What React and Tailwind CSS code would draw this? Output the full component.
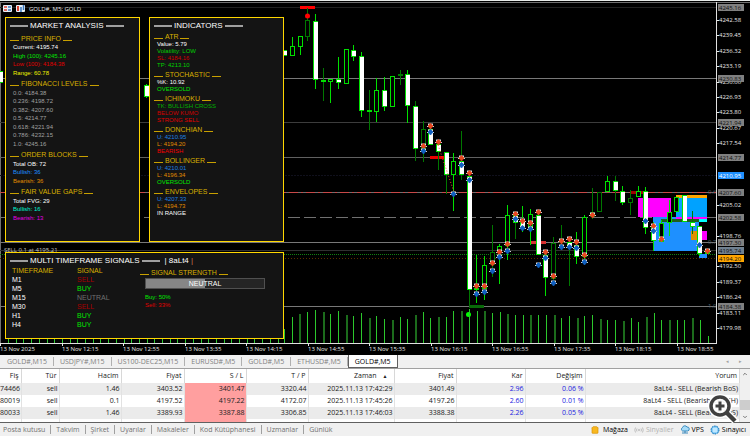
import { ChevronDown, ChevronUp, ShoppingBag } from 'lucide-react';
import { clsx } from 'clsx';

// x, high, body top, body bottom, low, kind (w = white, h = hollow), dim wick
const candles = [
  [0, 71, 71, 83, 83, 'w'],
  [146, 84, 85, 97, 98, 'w'],
  [284, 50, 50, 56, 56, 'w'],
  [292, 37, 46, 56, 56, 'h'],
  [300, 36, 36, 47, 55, 'h'],
  [307, 8, 20, 37, 41, 'h', 1],
  [315, 14, 21, 80, 89, 'w'],
  [323, 68, 80, 82, 101, 'w', 1],
  [330, 79, 79, 82, 103, 'h'],
  [338, 57, 79, 83, 89, 'w'],
  [346, 49, 49, 84, 84, 'h'],
  [353, 45, 50, 57, 61, 'w'],
  [361, 52, 56, 111, 117, 'w'],
  [369, 90, 110, 112, 130, 'w', 1],
  [376, 78, 90, 112, 122, 'h'],
  [384, 77, 90, 107, 111, 'w'],
  [392, 76, 76, 107, 107, 'h'],
  [400, 70, 74, 75, 85, 'h', 1],
  [407, 70, 74, 106, 123, 'w'],
  [415, 101, 106, 149, 161, 'w', 1],
  [423, 121, 129, 149, 162, 'h', 1],
  [430, 124, 129, 145, 145, 'w'],
  [438, 140, 144, 152, 170, 'w', 1],
  [446, 152, 152, 175, 194, 'w', 1],
  [453, 153, 161, 175, 211, 'h'],
  [461, 131, 161, 175, 180, 'w', 1],
  [469, 176, 176, 290, 305, 'w', 1],
  [476, 255, 288, 290, 303, 'h'],
  [484, 256, 265, 289, 300, 'h'],
  [492, 225, 252, 265, 277, 'h', 1],
  [499, 244, 246, 252, 284, 'h'],
  [507, 205, 215, 246, 260, 'h'],
  [515, 212, 215, 223, 239, 'w', 1],
  [522, 206, 221, 227, 232, 'w'],
  [530, 209, 214, 227, 245, 'h'],
  [538, 210, 215, 255, 255, 'w'],
  [545, 250, 255, 278, 296, 'w'],
  [553, 237, 243, 279, 283, 'h', 1],
  [561, 225, 241, 243, 248, 'h', 1],
  [569, 238, 242, 247, 286, 'w', 1],
  [576, 232, 245, 257, 264, 'w'],
  [584, 215, 217, 257, 263, 'h'],
  [592, 188, 212, 217, 219, 'h', 1],
  [599, 192, 192, 212, 212, 'h', 1],
  [607, 176, 181, 192, 192, 'h'],
  [615, 176, 181, 191, 201, 'w', 1],
  [622, 186, 191, 203, 205, 'w'],
  [630, 190, 198, 203, 215, 'h', 1],
  [638, 186, 191, 197, 197, 'h'],
  [645, 187, 191, 228, 234, 'w'],
  [653, 222, 226, 241, 251, 'w'],
  [661, 220, 223, 242, 242, 'h'],
  [669, 200, 212, 223, 236, 'h'],
  [676, 197, 197, 212, 212, 'h'],
  [684, 195, 195, 222, 222, 'w'],
  [692, 211, 222, 227, 234, 'w', 1],
  [699, 226, 226, 254, 256, 'w'],
  [707, 250, 250, 254, 254, 'h'],
];

const sellMarks = [
  [423, 146], [430, 126], [438, 142], [461, 158], [469, 173], [476, 286], [484, 286],
  [492, 263], [499, 252], [507, 244], [515, 214], [522, 221], [530, 223], [538, 212],
  [545, 252], [553, 276], [561, 241], [569, 239], [576, 242], [584, 255], [592, 215],
  [653, 226], [661, 239], [707, 251],
];

const buyMarks = [
  [423, 151], [430, 132], [453, 194], [461, 165], [469, 180], [476, 294], [484, 292],
  [492, 271], [499, 257], [507, 251], [515, 219], [522, 228], [530, 229], [538, 265],
  [545, 258], [553, 283], [561, 247], [569, 247], [576, 248], [584, 262], [645, 221],
  [653, 231], [699, 245],
];

// volume bar tops, from x = 284 on, one every 7.7
const volumes = [
  329, 317, 314, 312, 310, 312, 314, 311, 315, 316, 313, 318, 316, 319, 320, 317, 319, 315,
  312, 318, 317, 317, 311, 311, 309, 311, 311, 313, 312, 314, 315, 315, 315, 315, 315, 315,
  318, 316, 318, 316, 315, 319, 320, 320, 321, 318, 322, 317, 313, 320, 320, 320, 320, 318,
  320, 336,
];

const prices = [
  '4242.58', '4239.45', '4236.32', '4233.19', '4230.06', '4226.93', '4223.80', '4220.67',
  '4217.54', '4214.41', '4211.28', '4208.15', '4205.02', '4201.89', '4198.76', '4195.63',
  '4192.50', '4189.37', '4186.24', '4183.11', '4179.98',
];

const priceTags = [
  [7, '4245.16', '#808080'],
  [78, '4230.83', '#808080'],
  [122, '4221.94', '#808080'],
  [157, '4214.77', '#808080'],
  [175, '4210.95', '#1e90ff'],
  [192, '4207.60', '#808080'],
  [217, '4202.58', '#808080'],
  [242, '4197.30', '#808080'],
  [250, '4195.74', '#708090'],
  [258, '4194.20', '#ffa500'],
  [306, '4184.38', '#808080'],
];

// scale labels that sit right under a tag are left out
const scale = prices
  .map((price, i) => [Math.round(20 + i * 15.4), price])
  .filter(([y]) => !priceTags.some(([tagY]) => Math.abs(tagY - y) < 4));

const times = [
  '13 Nov 2025', '13 Nov 12:15', '13 Nov 12:55', '13 Nov 13:35', '13 Nov 14:15', '13 Nov 14:55',
  '13 Nov 15:35', '13 Nov 16:15', '13 Nov 16:55', '13 Nov 17:35', '13 Nov 18:15', '13 Nov 18:55',
];

const market = [
  ['PRICE INFO', [
    ['Current: 4195.74', 'text-white'],
    ['High (100): 4245.16', 'text-[#00e600]'],
    ['Low (100): 4184.38', 'text-[#e00000]'],
    ['Range: 60.78', 'text-[#f0f000]'],
  ]],
  ['FIBONACCI LEVELS', [
    ['0.0: 4184.38', 'text-[#a0a0a0]'],
    ['0.236: 4198.72', 'text-[#a0a0a0]'],
    ['0.382: 4207.60', 'text-[#a0a0a0]'],
    ['0.5: 4214.77', 'text-[#a0a0a0]'],
    ['0.618: 4221.94', 'text-[#a0a0a0]'],
    ['0.786: 4232.15', 'text-[#a0a0a0]'],
    ['1.0: 4245.16', 'text-[#a0a0a0]'],
  ]],
  ['ORDER BLOCKS', [
    ['Total OB: 72', 'text-white'],
    ['Bullish: 36', 'text-[#1e90ff]'],
    ['Bearish: 36', 'text-[#e08c00]'],
  ]],
  ['FAIR VALUE GAPS', [
    ['Total FVG: 29', 'text-white'],
    ['Bullish: 16', 'text-[#00f0d0]'],
    ['Bearish: 13', 'text-[#e000e0]'],
  ]],
];

const indicators = [
  ['ATR', [
    ['Value: 5.79', 'text-white'],
    ['Volatility: LOW', 'text-[#00d000]'],
    ['SL: 4184.16', 'text-[#d00000]'],
    ['TP: 4213.10', 'text-[#00d000]'],
  ]],
  ['STOCHASTIC', [
    ['%K: 10.92', 'text-white'],
    ['OVERSOLD', 'text-[#00e600]'],
  ]],
  ['ICHIMOKU', [
    ['TK: BULLISH CROSS', 'text-[#00b000]'],
    ['BELOW KUMO', 'text-[#d00000]'],
    ['STRONG SELL', 'text-[#e00000]'],
  ]],
  ['DONCHIAN', [
    ['U: 4210.95', 'text-[#1e80e0]'],
    ['L: 4194.20', 'text-[#e08c00]'],
    ['BEARISH', 'text-[#f00000]'],
  ]],
  ['BOLLINGER', [
    ['U: 4210.01', 'text-[#1e80e0]'],
    ['L: 4196.34', 'text-[#e08c00]'],
    ['OVERSOLD', 'text-[#00e600]'],
  ]],
  ['ENVELOPES', [
    ['U: 4207.33', 'text-[#1e80e0]'],
    ['L: 4194.73', 'text-[#e08c00]'],
    ['IN RANGE', 'text-white'],
  ]],
];

const signals = [
  ['M1', 'SELL'],
  ['M5', 'BUY'],
  ['M15', 'NEUTRAL'],
  ['M30', 'SELL'],
  ['H1', 'BUY'],
  ['H4', 'BUY'],
];

const signalColors = {
  SELL: 'text-[#a80000]',
  BUY: 'text-[#00e600]',
  NEUTRAL: 'text-[#707070]',
};

const chartTabs = ['GOLD#,M15', 'USDJPY#,M15', 'US100-DEC25,M15', 'EURUSD#,M5', 'GOLD#,M5', 'ETHUSD#,M5', 'GOLD#,M5'];

const columns = [
  ['Fiş', 'w-[21px]'],
  ['Tür', 'w-[38px]'],
  ['Hacim', 'w-[62px]'],
  ['Fiyat', 'w-[63px]'],
  ['S / L', 'w-[62px]'],
  ['T / P', 'w-[62px]'],
  ['Zaman', 'w-[86px]'],
  ['Fiyat', 'w-[62px]'],
  ['Kar', 'w-[69px]'],
  ['Değişim', 'w-[60px]'],
  ['Yorum', ''],
];

const trades = [
  ['74466', 'sell', '1.46', '3403.52', '3401.47', '3320.44', '2025.11.13 17:42:29', '3401.49', '2.96', '0.06 %', '8aLt4 - SELL (Bearish BoS)'],
  ['80019', 'sell', '0.1', '4197.52', '4197.22', '4172.07', '2025.11.13 17:45:26', '4197.26', '2.60', '0.01 %', '8aLt4 - SELL (Bearish CHoCH)'],
  ['80033', 'sell', '1.46', '3389.93', '3387.88', '3306.85', '2025.11.13 17:46:03', '3388.38', '2.26', '0.05 %', '8aLt4 - SELL (Bearish BoS)'],
  ['80037', 'sell', '0.09', '4197.53', '4197.23', '4180.89', '2025.11.13 17:46:03', '4197.13', '1.47', '0.01 %', '8aLt4 - SELL (Bearish BoS)'],
];

const toolTabs = ['Posta kutusu', 'Takvim', 'Şirket', 'Uyarılar', 'Makaleler', 'Kod Kütüphanesi', 'Uzmanlar', 'Günlük'];

function Candle({ data }) {
  const [x, high, top, bottom, low, kind, dim] = data;
  const color = dim ? '#007800' : '#00e000';
  return (
    <g stroke={color}>
      <path d={`M${x + 0.5} ${high}V${low}`} />
      <rect
        x={x - 2 + 0.5}
        y={top + 0.5}
        width={4}
        height={Math.max(bottom - top - 1, 1)}
        fill={kind === 'w' ? '#fff' : '#000'}
        stroke={kind === 'w' ? '#00e000' : color}
      />
      {kind === 'w' && <rect x={x - 1} y={top + 1} width={4} height={Math.max(bottom - top - 2, 0)} fill="#fff" stroke="none" />}
    </g>
  );
}

function Mark({ x, y, color }) {
  return (
    <g transform={`translate(${x + 0.5} ${y})`}>
      <path d="M-2.5 -2.5H2.5V0H3.5V1H-3.5V0H-2.5Z" fill="#d8d8d8" />
      <path d="M0 -2.5L2.5 0L0 3L-2.5 0Z" fill={color} stroke={color} strokeWidth="0.8" />
    </g>
  );
}

function PriceChart() {
  return (
    <svg viewBox="0 0 750 355" className="block w-full" fontFamily="'Open Sans', sans-serif" fontSize="7">
      <rect width="750" height="355" fill="#000" />
      <rect width="750" height="1" fill="#e8ecea" />
      <path d="M0 2.5H750M0.5 2V343" stroke="#707070" fill="none" />

      <g fill="none" shapeRendering="crispEdges">
        <path d="M0 7.5H716" stroke="#222" />
        <path d="M0 78.5H716M0 242.5H716M0 306.5H716" stroke="#787878" />
        <path d="M0 122.5H716" stroke="#3c3c3c" />
        <path d="M0 157.5H716" stroke="#606060" />
        <path d="M0 192.5H716" stroke="#707070" />
        <path d="M0 192.5H716" stroke="#c84848" strokeDasharray="9 3 2 3" />
        <path d="M0 217.5H716" stroke="#707070" strokeDasharray="12 4" />
        <path d="M0 250.5H716" stroke="#303030" />
        <path d="M0 254.5H716" stroke="#108010" strokeDasharray="1 1" />
        <path d="M0 258.5H716" stroke="#5a3000" strokeDasharray="1 2" />
        <path d="M0 175.5H716" stroke="#10101c" strokeDasharray="2 1" />
      </g>

      <g shapeRendering="crispEdges">
        <rect x="638" y="198" width="33" height="19" fill="#ff00ff" />
        <rect x="653" y="217" width="46" height="34" fill="#1e90ff" />
        <rect x="676" y="195" width="31" height="25" fill="#00a2ff" />
        <rect x="676" y="195" width="31" height="3" fill="#ffa500" />
        <rect x="676" y="217" width="31" height="2" fill="#ff00ff" />
        <rect x="661" y="219" width="38" height="3" fill="#20601c" />
        <rect x="699" y="219" width="8" height="3" fill="#00ffff" />
        <rect x="691" y="231" width="11" height="9" fill="#e09000" />
        <rect x="702" y="231" width="5" height="9" fill="#ff00ff" />
        <rect x="699" y="254" width="8" height="4" fill="#1e90ff" />
        <rect x="630" y="191" width="15" height="3" fill="#a00000" />
        <rect x="300" y="6" width="15" height="3" fill="#ff0000" />
        <rect x="430" y="156" width="16" height="3" fill="#e80000" />
        <rect x="530" y="241" width="16" height="3" fill="#d83030" />
        <rect x="469" y="305" width="15" height="3" fill="#086808" />
      </g>

      {candles.map((c) => <Candle key={c[0]} data={c} />)}
      <path d="M438 145L454 192" stroke="#ff5030" strokeDasharray="1 2" />
      <circle cx="307.5" cy="16" r="2.5" fill="#ff0000" />
      <circle cx="468.5" cy="314.5" r="2.5" fill="#00ff00" />
      {sellMarks.map(([x, y]) => <Mark key={x} x={x} y={y} color="#e84820" />)}
      {buyMarks.map(([x, y]) => <Mark key={x} x={x} y={y} color="#1060c0" />)}

      <g shapeRendering="crispEdges">
        {Array.from({ length: 36 }, (_, i) => (
          <rect key={i} x={Math.round(8 + i * 7.7)} y="336" width="1" height="7" fill="#30c830" />
        ))}
        {volumes.map((top, i) => (
          <rect
            key={i}
            x={Math.round(284 + i * 7.7)}
            y={top}
            width={i % 3 === 2 ? 2 : 1}
            height={343 - top}
            fill={i % 3 === 2 ? '#1c6c1c' : '#2cc82c'}
          />
        ))}
      </g>

      <text x="29" y="11" fill="#e8e8e8" fontSize="6">GOLD#, M5:  GOLD</text>
      <text x="4" y="252" fill="#c0c0c0" fontSize="6">SELL 0.1 at 4195.21</text>
      <g fontSize="6" fill="#50606c">
        <text x="708" y="194">0.6</text>
        <text x="708" y="244">0.7</text>
        <text x="708" y="308">1.0</text>
      </g>
      <g>
        <rect x="3" y="5" width="9" height="7" rx="1" fill="#e8f0f8" />
        <path d="M4 7H7M4 10H7" stroke="#d84030" strokeWidth="1.5" />
        <path d="M8 7H11M8 10H11" stroke="#3878c0" strokeWidth="1.5" />
        <rect x="16" y="5" width="9" height="7" rx="1" fill="#e8f0f8" />
        <path d="M18 6V11" stroke="#d84030" strokeWidth="2" />
        <path d="M21 7V12M23.5 5V10" stroke="#3878c0" strokeWidth="1.5" />
      </g>

      <path d="M716.5 2V343.5M0 343.5H717" stroke="#e0e0e0" fill="none" />
      <g fill="#e8e8e8" fontSize="6">
        {scale.map(([y, price]) => (
          <g key={price}>
            <rect x="717" y={y} width="2" height="1" />
            <text x="719" y={y + 2}>{price}</text>
          </g>
        ))}
        {times.map((t, i) => {
          const x = Math.round(i * 61.5);
          return (
            <g key={t}>
              <rect x={x} y="343" width="1" height="3" />
              <text x={x} y="351">{t}</text>
            </g>
          );
        })}
        {priceTags.map(([y, p, color]) => (
          <g key={p}>
            <rect x="718" y={y - 3} width="26" height="7" fill={color} />
            <text x="719" y={y + 3} fill={color === '#1e90ff' ? '#fff' : '#101010'}>{p}</text>
          </g>
        ))}
      </g>
    </svg>
  );
}

function PanelTitle({ children }) {
  return (
    <h2 className="flex items-center gap-[2px] text-[8px] leading-[10px] text-white whitespace-nowrap">
      <span className="w-[18px] h-[2px] bg-[#a0a0a0]" />
      {children}
      <span className="w-[18px] h-[2px] bg-[#a0a0a0]" />
    </h2>
  );
}

function SectionTitle({ children, className }) {
  return (
    <h3 className={clsx('flex items-center gap-[2px] text-[7px] text-[#d8b000] whitespace-nowrap', className)}>
      <span className="w-[9px] h-px mt-[3px] bg-[#c8a000]" />
      {children}
      <span className="w-[9px] h-px mt-[3px] bg-[#c8a000]" />
    </h3>
  );
}

function Sections({ sections, rowClass, titleClass }) {
  return sections.flatMap(([title, rows]) => [
    <SectionTitle key={title} className={titleClass}>{title}</SectionTitle>,
    ...rows.map(([text, color]) => (
      <p key={title + text} className={clsx('pl-[3px] text-[6px] whitespace-nowrap', rowClass, color)}>{text}</p>
    )),
  ]);
}

function SignalsPanel() {
  return (
    <section className="h-[87px] border border-[#ffd700] bg-[#141414] pl-1 pt-[3px]">
      <div className="flex items-center gap-[5px]">
        <PanelTitle>MULTI TIMEFRAME SIGNALS</PanelTitle>
        <span className="text-[8px] leading-[10px] text-white">| 8aLt4 <span className="text-[#c87850]">|</span></span>
      </div>
      <div className="flex">
        <table className="w-[130px] text-left text-[7px] leading-[9px]">
          <thead className="text-[#d8b000]">
            <tr>
              <th className="w-[67px] p-0 pl-[2px] font-normal">TIMEFRAME</th>
              <th className="p-0 font-normal">SIGNAL</th>
            </tr>
          </thead>
          <tbody>
            {signals.map(([frame, signal]) => (
              <tr key={frame}>
                <td className="p-0 pl-[2px] text-white">{frame}</td>
                <td className={clsx('p-0', signalColors[signal])}>{signal}</td>
              </tr>
            ))}
          </tbody>
        </table>
        <div className="pt-[2px]">
          <SectionTitle className="leading-[9px]">SIGNAL STRENGTH</SectionTitle>
          <div className="ml-[5px] mt-px flex w-[120px] h-[11px] border border-[#505050] bg-[linear-gradient(to_right,#868686_50%,#252525_50%)] items-center justify-center pt-px text-[7px] text-white">
            NEUTRAL
          </div>
          <p className="ml-[5px] mt-1 text-[6px] leading-[8px] text-[#00e600]">Buy: 50%</p>
          <p className="ml-[5px] text-[6px] leading-[8px] text-[#e00000]">Sell: 33%</p>
        </div>
      </div>
    </section>
  );
}

function ChartTabs() {
  return (
    <nav className="flex h-[14px] items-stretch border-b border-[#a0a0a0] bg-[#f0f0f0] pl-px text-[7px] text-[#808080] whitespace-nowrap">
      {chartTabs.map((tab, i) => {
        const active = i === chartTabs.length - 1;
        return (
          <button
            key={i}
            className={clsx(
              'px-[6px]',
              active ? 'border border-t-0 border-[#606060] bg-white leading-[11px] text-black' : 'my-[2px] border-r border-[#b0b0b0] leading-[8px]'
            )}
          >
            {tab}
          </button>
        );
      })}
      <span className="ml-auto flex w-6 justify-between pr-2 items-center text-[5px] text-[#a0a0a0]">
        <span>◂</span>
        <span>▸</span>
      </span>
    </nav>
  );
}

function TradeTable() {
  return (
    <div className="flex h-[54px] overflow-hidden border-b border-[#606060] bg-white">
      <div className="flex-1 overflow-hidden">
        <table className="w-full table-fixed text-right text-[7px] leading-[12px] text-[#202020] whitespace-nowrap">
          <thead>
            <tr className="h-[14px]">
              {columns.map(([name, width], i) => (
                <th key={i} className={clsx('p-0 pr-[2px] font-normal border-r border-[#d8d8d8]', width)}>
                  {name}
                  {name === 'Zaman' && <span className="pl-[6px] pr-1 text-[5px]">▲</span>}
                </th>
              ))}
            </tr>
          </thead>
          <tbody>
            {trades.map((row, r) => (
              <tr key={r} className={r % 2 ? 'bg-white' : 'bg-[#ebebeb]'}>
                {row.map((cell, i) => (
                  <td
                    key={i}
                    className={clsx(
                      'p-0 pr-px border-r border-[#e2e2e2]',
                      i === 4 && 'bg-[#ff9f9f]',
                      (i === 8 || i === 9) && 'text-[#2020e0]'
                    )}
                  >
                    {cell}
                  </td>
                ))}
              </tr>
            ))}
          </tbody>
        </table>
      </div>
      <div className="flex w-[10px] flex-col items-center justify-between bg-[#f0f0f0] py-[2px] text-[#505050]">
        <ChevronUp className="w-[6px] h-[6px]" strokeWidth={3} />
        <div className="mt-[18px] h-[10px] w-full bg-[#cdcdcd]" />
        <ChevronDown className="w-[6px] h-[6px]" strokeWidth={3} />
      </div>
    </div>
  );
}

function StatusBar() {
  return (
    <footer className="flex h-[13px] items-center bg-[#f0f0f0] text-[7px] leading-[11px] text-[#707070] whitespace-nowrap">
      {toolTabs.map((tab, i) => (
        <button key={tab} className={clsx('leading-[9px]', i === 0 ? 'pl-[3px] pr-[5px]' : 'border-l border-[#a0a0a0] px-[5px]')}>
          {tab}
        </button>
      ))}
      <div className="ml-auto flex items-center gap-[6px] pr-1 text-black">
        <button className="flex items-center gap-1">
          <ShoppingBag className="w-2 h-2 fill-[#f8b820] text-[#d89000]" /> Mağaza
        </button>
        <button className="flex items-center gap-[2px] text-[#b0b0b0]">
          <svg viewBox="0 0 20 12" className="w-[10px] h-[6px]" fill="none" stroke="currentColor" strokeWidth="1.5">
            <path d="M3 1Q0 6 3 11M6 3Q4 6 6 9M14 3Q16 6 14 9M17 1Q20 6 17 11" />
            <circle cx="10" cy="6" r="1.5" />
          </svg>
          Sinyaller
        </button>
        <button className="flex items-center gap-[2px]">
          <svg viewBox="0 0 20 18" className="w-[10px] h-[9px]" fill="#a8dcf8" stroke="#2880b8" strokeWidth="1.8">
            <path d="M5 12A4 4 0 0 1 5 5A5 5 0 0 1 14 4A4 4 0 0 1 15 12Z" />
            <path d="M10 12V16M4 16H16" />
          </svg>
          VPS
        </button>
        <button className="flex items-center gap-[2px]">
          <svg viewBox="0 0 20 20" className="w-[10px] h-[10px]">
            <circle cx="10" cy="10" r="8" fill="#60b8f0" stroke="#1870b0" strokeWidth="2" strokeDasharray="3 2" />
            <rect x="5" y="5" width="10" height="10" rx="2" fill="#c0e8ff" />
          </svg>
          Sınayıcı
        </button>
      </div>
    </footer>
  );
}

export default function App() {
  return (
    <div className="relative overflow-hidden font-['Open_Sans',sans-serif]">
      <main className="relative">
        <PriceChart />
        <div className="absolute left-[5px] top-[17px] flex w-[279px] flex-col gap-[10px] font-['Liberation_Sans',sans-serif]">
          <div className="flex h-[225px] gap-[9px]">
            <section className="flex flex-1 flex-col justify-between border border-[#ffd700] bg-[#141414] pl-1 pt-[3px] pb-[19px]">
              <PanelTitle>MARKET ANALYSIS</PanelTitle>
              <Sections sections={market} rowClass="leading-[8px]" titleClass="pt-[3px] leading-[8px]" />
            </section>
            <section className="flex-1 border border-[#ffd700] bg-[#141414] pl-1 pt-[3px]">
              <PanelTitle>INDICATORS</PanelTitle>
              <Sections sections={indicators} rowClass="leading-[7px]" titleClass="pt-[2px] leading-[8px]" />
            </section>
          </div>
          <SignalsPanel />
        </div>
      </main>
      <ChartTabs />
      <TradeTable />
      <StatusBar />
      <button aria-label="Zoom in" className="absolute bottom-3 right-3">
        <svg viewBox="0 0 30 30" className="w-[30px] h-[30px]" fill="none">
          <path d="M19 19L27 27" stroke="#fff" strokeWidth="7" />
          <circle cx="12" cy="12" r="9.5" fill="#fff" fillOpacity="0.9" stroke="#fff" strokeWidth="5" />
          <circle cx="12" cy="12" r="9" stroke="#404040" strokeWidth="3.5" />
          <path d="M19 19L27 27" stroke="#404040" strokeWidth="4.5" />
          <path d="M12 7.5V16.5M7.5 12H16.5" stroke="#404040" strokeWidth="3" />
        </svg>
      </button>
    </div>
  );
}
